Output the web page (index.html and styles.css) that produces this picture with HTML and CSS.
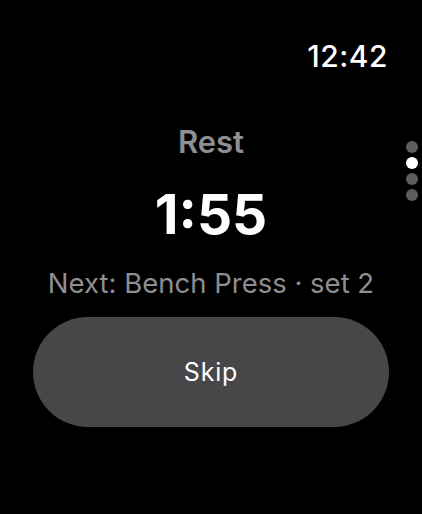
FILE: index.html
```html
<!DOCTYPE html>
<html>
<head>
<meta charset="utf-8">
<link rel="stylesheet" href="styles.css">
</head>
<body>
<div class="screen">
  <div class="status"><span class="time">12:42</span></div>
  <div class="content">
    <div class="label">Rest</div>
    <div class="timer">1:55</div>
    <div class="next">Next: Bench Press · set 2</div>
    <button class="skip">Skip</button>
  </div>
  <div class="pager">
    <span class="dot"></span>
    <span class="dot active"></span>
    <span class="dot"></span>
    <span class="dot"></span>
  </div>
</div>
</body>
</html>
```
FILE: styles.css
```css
html, body {
  margin: 0;
  padding: 0;
  background: #000;
}
body {
  font-family: Inter, "Noto Sans", sans-serif;
  color: #fff;
}
.screen {
  position: relative;
  width: 422px;
  height: 514px;
  overflow: hidden;
  display: flex;
  flex-direction: column;
}
.status {
  display: flex;
  justify-content: flex-end;
  padding: 41px 34px 0 0;
}
.time {
  font-size: 30px;
  line-height: 1;
  font-weight: 500;
  letter-spacing: 0.5px;
}
.content {
  display: flex;
  flex-direction: column;
  align-items: center;
  margin-top: 55px;
}
.label {
  font-size: 31px;
  line-height: 1;
  font-weight: 600;
  color: #8e8e93;
}
.timer {
  margin-top: 30px;
  font-size: 55px;
  line-height: 1;
  font-weight: 700;
}
.next {
  margin-top: 28px;
  font-size: 27.5px;
  line-height: 1;
  font-weight: 400;
  color: #8e8e93;
}
.skip {
  margin-top: 19px;
  width: 356px;
  height: 110px;
  border: none;
  border-radius: 55px;
  background: #474749;
  color: #fff;
  font-family: Inter, "Noto Sans", sans-serif;
  font-size: 25px;
  font-weight: 400;
  letter-spacing: 0.8px;
  padding: 0;
}
.pager {
  position: absolute;
  left: 406px;
  top: 141px;
  display: flex;
  flex-direction: column;
  gap: 4px;
}
.dot {
  width: 12px;
  height: 12px;
  border-radius: 50%;
  background: #5c5c5e;
}
.dot.active {
  background: #fff;
}
```
